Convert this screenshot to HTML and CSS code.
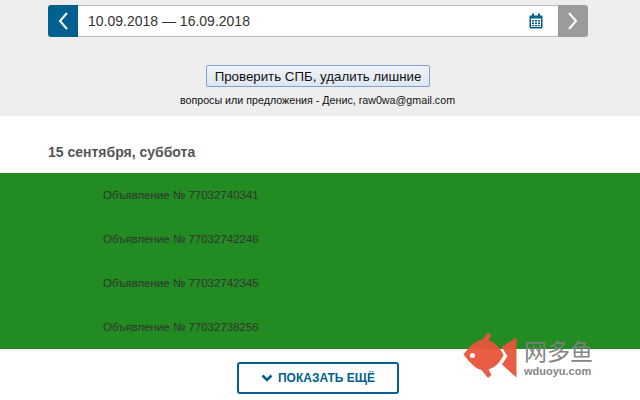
FILE: index.html
```html
<!DOCTYPE html>
<html lang="ru">
<head>
  <meta charset="UTF-8">
  <title>Объявления</title>
  <link rel="stylesheet" href="styles.css">
</head>
<body>
  <div class="top">
    <div class="date-bar">
      <div class="arrow arrow-prev">
        <svg width="12" height="20" viewBox="0 0 12 20"><path d="M10 2 L3 10 L10 18" fill="none" stroke="#fff" stroke-width="2"/></svg>
      </div>
      <div class="date-input">
        <span>10.09.2018 — 16.09.2018</span>
        <svg class="cal" width="14" height="16" viewBox="0 0 14 16">
          <path d="M3 0.5h2v2h4v-2h2v2h1.5a1 1 0 0 1 1 1v11a1 1 0 0 1-1 1h-11a1 1 0 0 1-1-1v-11a1 1 0 0 1 1-1h1.5z" fill="#00608f"/>
          <path d="M2 5.500h10v8.500h-10z" fill="#fff"/>
          <path d="M3 7h2v1.500h-2zM6 7h2v1.500h-2zM9 7h2v1.500h-2zM3 9.500h2v1.500h-2zM6 9.500h2v1.500h-2zM9 9.500h2v1.500h-2zM3 12h2v1.200h-2zM6 12h2v1.200h-2zM9 12h2v1.200h-2z" fill="#00608f"/>
        </svg>
      </div>
      <div class="arrow arrow-next">
        <svg width="12" height="20" viewBox="0 0 12 20"><path d="M2 2 L9 10 L2 18" fill="none" stroke="#fff" stroke-width="2"/></svg>
      </div>
    </div>
    <button class="check-btn">Проверить СПБ, удалить лишние</button>
    <div class="contact">вопросы или предложения - Денис, raw0wa@gmail.com</div>
  </div>

  <h2 class="day">15 сентября, суббота</h2>

  <div class="list">
    <div class="row">Объявление № 77032740341</div>
    <div class="row">Объявление № 77032742246</div>
    <div class="row">Объявление № 77032742345</div>
    <div class="row">Объявление № 77032738256</div>
  </div>

  <div class="more-wrap">
    <a class="more">
      <svg width="12" height="8" viewBox="0 0 12 8"><path d="M1.500 1.500 L6 6 L10.500 1.500" fill="none" stroke="#00608f" stroke-width="2.600"/></svg>
      ПОКАЗАТЬ ЕЩЁ
    </a>
  </div>

  <!-- watermark -->
  <div class="mark">
    <svg width="54" height="48" viewBox="0 0 54 48">
      <path d="M25 0.500l3.500 3-3 4.500c7 3 12 8 15 15-3 7-8 12-15 14.500l3 5.500-3.500 3-6.500-8c-6-1-12-8-18-15.500 5-7 11-13.500 19-15z" fill="#e8553a"/>
      <circle cx="9.500" cy="23.500" r="2.500" fill="#fff"/>
      <path d="M53.500 5.500v40l-14.500-13 5.500-8.500-6-9z" fill="#e8553a"/>
    </svg>
    <div class="mark-text">
      <div class="mark-cn">网多鱼</div>
      <div class="mark-en">wduoyu.com</div>
    </div>
  </div>
</body>
</html>
```
FILE: styles.css
```css
html, body {
  margin: 0;
  padding: 0;
}

body {
  position: relative;
  width: 640px;
  height: 400px;
  overflow: hidden;
  background: #fff;
  font-family: "Liberation Sans", Arial, sans-serif;
}

.top {
  height: 116px;
  background: #eee;
  padding-top: 5px;
  box-sizing: border-box;
  text-align: center;
}

.date-bar {
  display: flex;
  width: 540px;
  height: 32px;
  margin: 0 auto 0 48px;
}

.arrow {
  width: 30px;
  display: flex;
  align-items: center;
  justify-content: center;
}

.arrow-prev {
  background: #00608f;
  border-radius: 3px 0 0 3px;
}

.arrow-next {
  background: #9b9b9b;
  border-radius: 0 3px 3px 0;
}

.date-input {
  flex: 1;
  display: flex;
  align-items: center;
  justify-content: space-between;
  background: #fff;
  border-top: 1px solid #bbb;
  border-bottom: 1px solid #bbb;
  padding: 0 15px 0 10px;
  font-size: 14px;
  color: #333;
}

.check-btn {
  display: block;
  width: 224px;
  height: 22px;
  margin: 28px 0 0 206px;
  padding: 0;
  background: linear-gradient(#f2f5f9, #dde6f0);
  border: 1px solid #7fa0d0;
  border-radius: 2px;
  font-family: inherit;
  font-size: 13.300px;
  color: #111;
}

.contact {
  margin-top: 6px;
  padding-right: 5px;
  font-size: 10.700px;
  line-height: 14px;
  color: #111;
}

.day {
  margin: 0;
  height: 57px;
  padding: 28px 0 0 48px;
  box-sizing: border-box;
  font-size: 14px;
  line-height: 16px;
  font-weight: bold;
  color: #555;
}

.list {
  background: #228b22;
  height: 176px;
}

.row {
  height: 44px;
  padding: 15px 0 0 103px;
  box-sizing: border-box;
  font-size: 11.500px;
  line-height: 14px;
  color: #333;
}

.more-wrap {
  display: flex;
  justify-content: center;
  padding: 13px 4px 0 0;
}

.more {
  display: flex;
  align-items: center;
  justify-content: center;
  gap: 5px;
  width: 162px;
  height: 32px;
  box-sizing: border-box;
  border: 2px solid #00608f;
  border-radius: 3px;
  font-size: 12px;
  font-weight: bold;
  color: #00608f;
}

.mark {
  position: absolute;
  left: 463px;
  top: 332px;
  display: flex;
  gap: 7px;
  opacity: 0.95;
}

.mark-text {
  padding-top: 6px;
  color: #808080;
}

.mark-cn {
  font-family: "Noto Sans CJK SC", sans-serif;
  font-size: 23px;
  line-height: 24px;
}

.mark-en {
  margin-top: 3px;
  font-size: 11px;
  line-height: 13px;
  font-weight: bold;
}
```
